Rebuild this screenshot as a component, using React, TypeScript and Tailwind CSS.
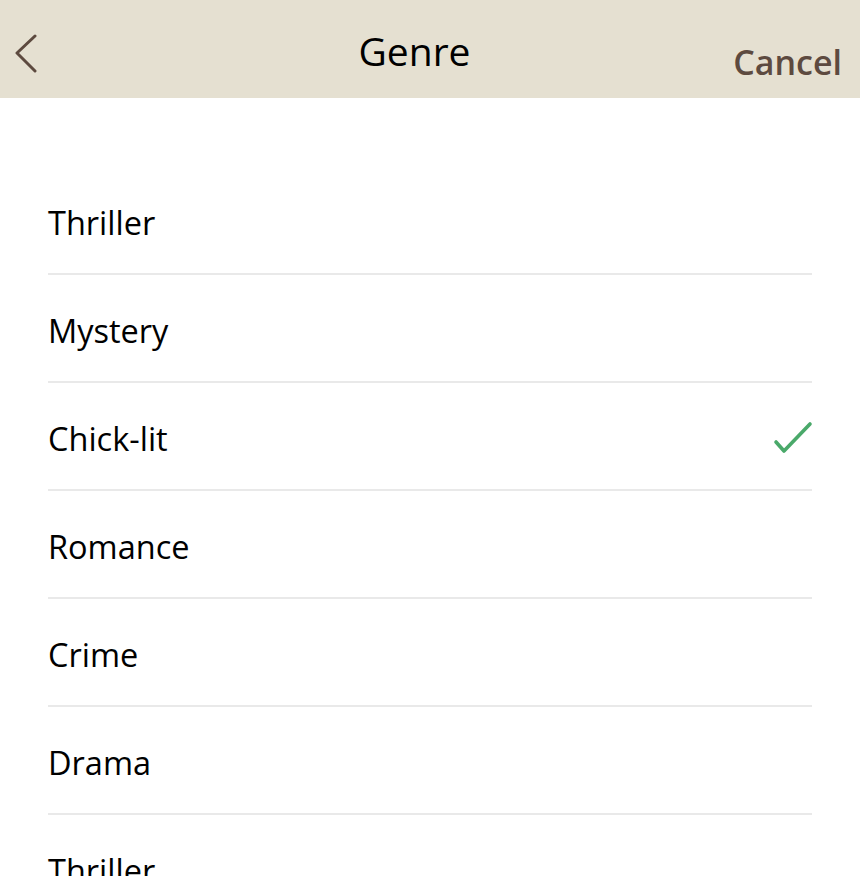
const genres = ['Thriller', 'Mystery', 'Chick-lit', 'Romance', 'Crime', 'Drama', 'Thriller'];
const selected = 2;

export default function App() {
  return (
    <div className="h-[876px] w-[860px] overflow-hidden bg-white font-['Open_Sans',sans-serif]">
      {/* Top bar */}
      <header className="flex h-[98px] items-start bg-[#e5e0d1]">
        <div className="w-[109px] pl-[14px] pt-[34px]">
          <svg width="26" height="40" viewBox="0 0 26 40" fill="none">
            <path d="M21 2 L3 19 L21 37" stroke="#5d4a3f" strokeWidth="3" strokeLinecap="round" strokeLinejoin="round" />
          </svg>
        </div>
        <h1 className="flex-1 pt-[31px] text-center text-[39px] leading-none font-normal text-black">Genre</h1>
        <div className="w-[140px] pr-[18px] pt-[45px] text-right">
          <button className="text-[34px] leading-none font-semibold text-[#5d4a3f]">Cancel</button>
        </div>
      </header>

      {/* Genre list */}
      <ul className="px-12 pt-[69px]">
        {genres.map((g, i) => (
          <li key={i} className="flex h-[108px] items-center justify-between border-b-2 border-[#e9e9e9]">
            <span className="pt-[6px] text-[32.5px] text-black">{g}</span>
            {i === selected && (
              <svg width="44" height="40" viewBox="0 0 44 40" fill="none" className="mr-[-3px] mt-[9px]">
                <path d="M5 21 L13 30 L39 3" stroke="#4aa96a" strokeWidth="3.6" strokeLinecap="round" strokeLinejoin="round" />
              </svg>
            )}
          </li>
        ))}
      </ul>
    </div>
  );
}
